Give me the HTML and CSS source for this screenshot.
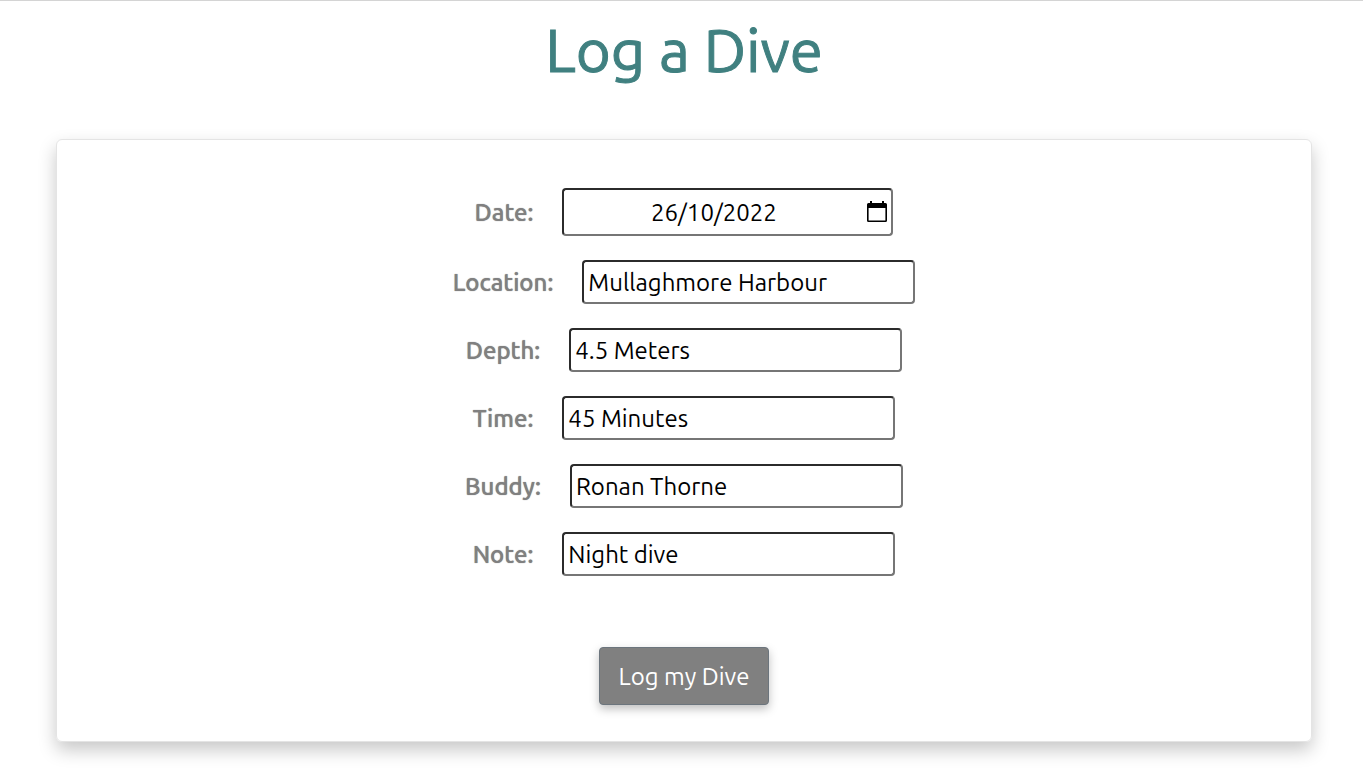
FILE: index.html
```html
<!DOCTYPE html>
<html lang="en">
<head>
<meta charset="utf-8">
<title>Log a Dive</title>
<link rel="stylesheet" href="styles.css">
</head>
<body>
<main class="page">
  <h1 class="title">Log a Dive</h1>
  <form class="card">
    <div class="field">
      <label class="label" for="date">Date:</label>
      <div class="date-box">
        <input class="date-input" id="date" type="text" value="26/10/2022">
        <button class="picker" type="button" aria-label="Open calendar">
          <svg class="picker-icon" viewBox="0 0 20 22"><path fill="#000" fill-rule="evenodd" d="M3 0h2v2h10V0h2v2h1.500a1.500 1.500 0 0 1 1.500 1.500v16a1.500 1.500 0 0 1-1.500 1.500H1.500A1.500 1.500 0 0 1 0 19.500v-16A1.500 1.500 0 0 1 1.500 2H3zM1.600 7v12.400h16.800V7z"/></svg>
        </button>
      </div>
    </div>
    <div class="field">
      <label class="label" for="location">Location:</label>
      <input class="input" id="location" type="text" value="Mullaghmore Harbour">
    </div>
    <div class="field">
      <label class="label" for="depth">Depth:</label>
      <input class="input" id="depth" type="text" value="4.5 Meters">
    </div>
    <div class="field">
      <label class="label" for="time">Time:</label>
      <input class="input" id="time" type="text" value="45 Minutes">
    </div>
    <div class="field">
      <label class="label" for="buddy">Buddy:</label>
      <input class="input" id="buddy" type="text" value="Ronan Thorne">
    </div>
    <div class="field">
      <label class="label" for="note">Note:</label>
      <input class="input" id="note" type="text" value="Night dive">
    </div>
    <button class="submit" type="submit">Log my Dive</button>
  </form>
</main>
</body>
</html>
```
FILE: styles.css
```css
* { box-sizing: border-box; }
body {
  margin: 0;
  background: #fff;
  font-family: Ubuntu, "Noto Sans", sans-serif;
  font-size: 24px;
}
.page {
  border-top: 1px solid #d4d4d4;
  padding: 13px 51px 36px 56px;
}
.title {
  margin: 0 0 53px;
  color: #408080;
  font-size: 60px;
  font-weight: 400;
  line-height: 72px;
  text-align: center;
  -webkit-text-stroke: 1px #408080;
}
.card {
  display: flex;
  flex-direction: column;
  align-items: center;
  gap: 24px;
  padding: 48px 24px 36px;
  border: 1px solid #e4e4e4;
  border-radius: 6px;
  box-shadow: 0 8px 18px rgba(0, 0, 0, 0.22);
}
.field {
  display: flex;
  align-items: center;
  gap: 29px;
}
.label {
  color: #808080;
  font-weight: 500;
  text-shadow: 0 0 1px #808080;
}
.input,
.date-box {
  width: 333px;
  height: 44px;
  padding: 0 4px;
  border: 2px solid;
  border-color: #2b2b2b #767676 #767676 #2b2b2b;
  border-radius: 4px;
  background: #fff;
  color: #000;
  font: inherit;
}
.date-box {
  display: flex;
  align-items: center;
  gap: 8px;
  width: 331px;
  height: 48px;
}
.date-input {
  flex: 1;
  min-width: 0;
  padding: 0;
  border: 0;
  outline: 0;
  background: none;
  font: inherit;
  text-align: center;
}
.picker {
  display: flex;
  padding: 0;
  border: 0;
  background: none;
}
.picker-icon {
  width: 20px;
  height: 22px;
}
.submit {
  margin-top: 47px;
  padding: 0 19px;
  height: 58px;
  border: 1px solid #6c757d;
  border-radius: 4px;
  background: #808080;
  box-shadow: 0 4px 10px rgba(0, 0, 0, 0.25);
  color: #fff;
  font: inherit;
}
```
